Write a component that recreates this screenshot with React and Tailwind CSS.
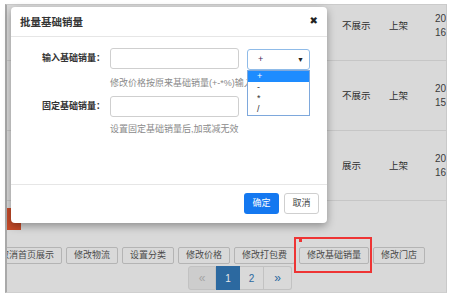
import React from "react";

const F = { fontFamily: '"Liberation Sans","Noto Sans CJK SC",sans-serif' };

function Row({ date2, status }) {
  return (
    <div className="h-[70px] border-b border-[#c6c6c6] flex items-center pl-[335px] text-[9.5px] text-[#2e2e2e]">
      <div className="w-[48px] leading-[14px]">{status}</div>
      <div className="w-[47px] leading-[14px]">上架</div>
      <div className="flex flex-col leading-[14px] text-[10px] text-[#3a3a3a]">
        <span>20</span>
        <span>{date2}</span>
      </div>
    </div>
  );
}

function Btn({ children, className = "" }) {
  return (
    <div
      className={
        "h-[17px] px-[7px] border border-[#b4b4b4] rounded-[2px] bg-[#d9d9d9] text-[9px] leading-[15px] text-[#4a4a4a] whitespace-nowrap shrink-0 " +
        className
      }
    >
      {children}
    </div>
  );
}

export default function App() {
  return (
    <div className="relative w-[450px] h-[302px] bg-white overflow-hidden" style={F}>
      {/* dimmed page frame */}
      <div className="absolute left-[5px] top-[4px] w-[442px] h-[289px] bg-[#d9d9d9] border-l-2 border-l-[#a9a9a9] border-t border-t-[#cbcbcb] border-r border-r-[#c9c9c9] border-b border-b-[#cfcfcf] overflow-hidden">
        <div className="flex flex-col">
          <div className="mt-[-14px]">
            <Row status="不展示" date2="16" />
            <Row status="不展示" date2="15" />
            <Row status="展示" date2="16" />
          </div>
          <div className="mt-[7px] w-[14px] h-[22px] bg-[#c64b29]" />
          <div className="mt-[17px] ml-[-15px] flex gap-[4px]">
            <Btn>取消首页展示</Btn>
            <Btn>修改物流</Btn>
            <Btn>设置分类</Btn>
            <Btn>修改价格</Btn>
            <Btn>修改打包费</Btn>
            <Btn>修改基础销量</Btn>
            <Btn>修改门店</Btn>
          </div>
          <div className="mt-[2px] ml-[181px] flex h-[24px] text-[10px]">
            <div className="w-[28px] h-[24px] flex items-center justify-center bg-[#cdcdcd] border border-[#c2c2c2] rounded-l-[3px] text-[#a5a5a5] text-[12px]">«</div>
            <div className="w-[24px] h-[24px] flex items-center justify-center bg-[#2c69a0] border border-[#2c69a0] text-[#e8e8e8]">1</div>
            <div className="w-[24px] h-[24px] flex items-center justify-center border border-[#c2c2c2] border-l-0 text-[#2c69a0]">2</div>
            <div className="w-[28px] h-[24px] flex items-center justify-center border border-[#c2c2c2] border-l-0 rounded-r-[3px] text-[#2c69a0] text-[12px]">»</div>
          </div>
        </div>
      </div>

      {/* red highlight */}
      <div className="absolute left-[294px] top-[237px] w-[78px] h-[36px] border-2 border-[#ee3434]">
        <div className="absolute left-[3px] top-0 w-[3px] h-[3px] bg-[#ee3434]" />
      </div>

      {/* modal */}
      <div className="absolute left-[11px] top-[7px] w-[316px] h-[216px] bg-white rounded-[4px] shadow-[0_3px_8px_rgba(0,0,0,0.35)] flex flex-col">
        <div className="relative h-[30px] border-b border-[#e6e6e6] flex items-center pl-[9px] pt-[2px]">
          <span className="text-[10.5px] font-semibold text-[#333]">批量基础销量</span>
          <span className="absolute right-[9px] top-[6px] text-[10px] font-bold text-[#222]" style={{ fontFamily: '"DejaVu Sans",sans-serif' }}>✖</span>
        </div>
        <div className="h-[147px] flex flex-col pt-[11px]">
          <div className="flex items-start">
            <div className="w-[94px] h-[21px] flex items-center justify-end text-[9px] font-bold text-[#333]">输入基础销量：</div>
            <div className="ml-[5px] w-[129px] h-[21px] border border-[#cfcfcf] rounded-[3px]" />
            <div className="ml-[8px] mt-[1px] w-[63px] h-[21px] border border-[#8fbbe8] rounded-[3px] flex items-center justify-between pl-[10px] pr-[5px] text-[9px] text-[#4a2a5a]">
              <span>+</span>
              <span className="text-[7px] leading-none text-[#222]">▼</span>
            </div>
          </div>
          <div className="mt-[7px] pl-[99px] text-[9px] leading-[13px] text-[#8a8a8a] whitespace-nowrap">修改价格按原来基础销量(+-*%)输入</div>
          <div className="mt-[6px] flex items-start">
            <div className="w-[94px] h-[21px] flex items-center justify-end text-[9px] font-bold text-[#333]">固定基础销量：</div>
            <div className="ml-[5px] w-[129px] h-[21px] border border-[#cfcfcf] rounded-[3px]" />
          </div>
          <div className="mt-[6px] pl-[99px] text-[9px] leading-[13px] text-[#8a8a8a] whitespace-nowrap">设置固定基础销量后,加或减无效</div>
        </div>
        <div className="h-[39px] border-t border-[#e6e6e6] flex justify-end items-start pt-[8px] pr-[8px] gap-[5px]">
          <div className="w-[35px] h-[21px] rounded-[3px] bg-[#1478f0] text-white text-[9px] flex items-center justify-center">确定</div>
          <div className="w-[35px] h-[21px] rounded-[3px] border border-[#cfcfcf] bg-white text-[#444] text-[9px] flex items-center justify-center">取消</div>
        </div>
      </div>

      {/* dropdown list */}
      <div className="absolute left-[247px] top-[70px] w-[63px] h-[46px] bg-white border border-[#7ea8dc] flex flex-col text-[9px] text-[#333]">
        <div className="h-[11px] leading-[11px] bg-[#1e8cff] text-white pl-[9px]">+</div>
        <div className="h-[11px] leading-[11px] pl-[9px]">-</div>
        <div className="h-[11px] leading-[11px] pl-[9px]">*</div>
        <div className="h-[11px] leading-[11px] pl-[9px]">/</div>
      </div>
    </div>
  );
}
